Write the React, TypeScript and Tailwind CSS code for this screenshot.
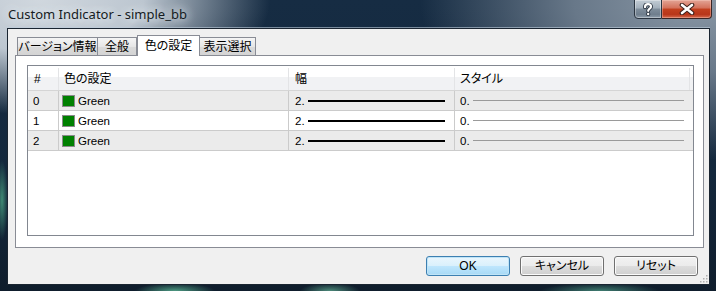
export default function App() {
  const rows = [0, 1, 2];
  return (
    <div className="relative w-[716px] h-[291px] overflow-hidden bg-[radial-gradient(ellipse_230px_115px_at_40px_0px,#d0d7de_0%,#bcc6d0_45%,rgba(150,165,180,0)_100%),radial-gradient(ellipse_280px_160px_at_700px_0px,#8a98a6_0%,#687889_45%,rgba(100,118,135,0)_100%),radial-gradient(ellipse_40px_8px_at_175px_291px,#4d9a82_0%,rgba(77,154,130,0)_100%),radial-gradient(ellipse_30px_8px_at_330px_291px,#4d8a7a_0%,rgba(77,138,122,0)_100%),radial-gradient(ellipse_60px_8px_at_600px_291px,#3f7c70_0%,rgba(63,124,112,0)_100%),radial-gradient(ellipse_6px_40px_at_2px_200px,#3f8a74_0%,rgba(63,138,116,0)_100%),linear-gradient(to_bottom,#162c43,#14283d_60%,#0f1d2c)] font-['Liberation_Sans','Noto_Sans_CJK_JP',sans-serif] text-[12px] text-black">
      {/* title bar */}
      <div className="flex h-[28px] items-start">
        <div className="ml-[8px] mt-[5px] font-['Noto_Sans',sans-serif] text-[13px] leading-[18px] text-[#151b22] [text-shadow:0_0_8px_#e6ebf0,0_0_12px_#e6ebf0]">
          Custom Indicator - simple_bb
        </div>
        <div className="ml-auto mr-[4px] mt-[-1px] flex">
          <div className="flex h-[20px] w-[28px] items-center justify-center rounded-bl-[4px] border border-[#2a3440] bg-[linear-gradient(to_bottom,#c2ccd5_0%,#a3b0bc_45%,#7f8e9c_50%,#6f7e8d_80%,#8e9dab_100%)] shadow-[inset_0_0_0_1px_rgba(255,255,255,0.35)]">
            <svg width="12" height="13" viewBox="0 0 12 13">
              <path d="M3 4.2 C3 2 4.5 1.2 6 1.2 C7.8 1.2 9 2.3 9 3.7 C9 5.6 6.2 5.8 6.2 7.8" fill="none" stroke="#2a3440" strokeWidth="4" strokeLinecap="round" />
              <circle cx="6.2" cy="11" r="2.1" fill="#2a3440" />
              <path d="M3 4.2 C3 2 4.5 1.2 6 1.2 C7.8 1.2 9 2.3 9 3.7 C9 5.6 6.2 5.8 6.2 7.8" fill="none" stroke="#ffffff" strokeWidth="2.2" strokeLinecap="round" />
              <circle cx="6.2" cy="11" r="1.2" fill="#ffffff" />
            </svg>
          </div>
          <div className="flex h-[20px] w-[50px] items-center justify-center rounded-br-[4px] border border-l-0 border-[#3a2525] bg-[linear-gradient(to_bottom,#e3a596_0%,#d3705a_45%,#c2401f_50%,#b8361a_80%,#d66a4e_100%)] shadow-[inset_0_0_0_1px_rgba(255,220,210,0.35)]">
            <svg width="16" height="12" viewBox="0 0 16 12">
              <path d="M3 2 L13 10 M13 2 L3 10" stroke="#3a1f1a" strokeWidth="4.6" strokeLinecap="round" />
              <path d="M3 2 L13 10 M13 2 L3 10" stroke="#ffffff" strokeWidth="2.6" strokeLinecap="round" />
            </svg>
          </div>
        </div>
      </div>

      {/* client area */}
      <div className="relative ml-[7px] flex h-[257px] w-[703px] flex-col border border-[#1a2531] bg-[#f0f0f0] shadow-[0_-1px_0_0_rgba(190,205,220,0.6)]">
        {/* tabs */}
        <div className="relative z-10 ml-[9px] mt-[6px] flex h-[20px] items-end leading-[16px]">
          <div className="flex h-[18px] w-[81px] items-center justify-center border border-b-0 border-[#898c95] bg-[linear-gradient(to_bottom,#f5f5f5,#e6e6e6_50%,#dadada_51%,#d4d4d4)] pt-[1px] [font-feature-settings:'palt']">
            バージョン情報
          </div>
          <div className="flex h-[18px] w-[39px] items-center justify-center border border-b-0 border-l-0 border-[#898c95] bg-[linear-gradient(to_bottom,#f5f5f5,#e6e6e6_50%,#dadada_51%,#d4d4d4)] pt-[1px] [font-feature-settings:'palt']">
            全般
          </div>
          <div className="mb-[-1px] flex h-[21px] w-[63px] items-start justify-center border border-b-0 border-[#898c95] bg-white pt-[2px] [font-feature-settings:'palt']">
            色の設定
          </div>
          <div className="flex h-[18px] w-[56px] items-center justify-center border border-b-0 border-l-0 border-[#898c95] bg-[linear-gradient(to_bottom,#f5f5f5,#e6e6e6_50%,#dadada_51%,#d4d4d4)] pt-[1px] [font-feature-settings:'palt']">
            表示選択
          </div>
        </div>

        {/* panel */}
        <div className="ml-[7px] h-[193px] w-[689px] border border-[#898c95] bg-white pl-[11px] pt-[9px]">
          <div className="flex h-[171px] w-[667px] flex-col border border-[#828790] bg-white">
            {/* header */}
            <div className="flex h-[25px] border-b border-[#d5d5d5] bg-[linear-gradient(to_bottom,#ffffff_0%,#ffffff_45%,#f1f2f4_46%,#f1f2f4_100%)] pt-[2px] leading-[16px] [font-feature-settings:'palt']">
              <div className="flex w-[31px] items-center border-r border-[#e3e4e6] pl-[6px]">#</div>
              <div className="flex w-[230px] items-center border-r border-[#e3e4e6] pl-[5px]">色の設定</div>
              <div className="flex w-[166px] items-center border-r border-[#e3e4e6] pl-[6px]">幅</div>
              <div className="flex w-[235px] items-center border-r border-[#e3e4e6] pl-[5px]">スタイル</div>
              <div className="flex-1" />
            </div>
            {rows.map((r) => (
              <div
                key={r}
                className={`flex h-[20px] border-b border-[#cbcbcb] text-[11.5px] leading-[14px] ${r === 1 ? 'bg-white' : 'bg-[#ebebeb]'}`}
              >
                <div className="flex w-[31px] items-center border-r border-[#cbcbcb] pl-[5px]">{r}</div>
                <div className="flex w-[230px] items-center border-r border-[#cbcbcb] pl-[3px]">
                  <span className="mr-[3px] h-[12px] w-[13px] border border-[#8a8a8a] bg-[#008000]" />
                  Green
                </div>
                <div className="flex w-[166px] items-center border-r border-[#cbcbcb] pl-[6px]">
                  <span className="w-[13px]">2.</span>
                  <span className="h-[2px] w-[137px] bg-black" />
                </div>
                <div className="flex flex-1 items-center pl-[5px]">
                  <span className="w-[13px]">0.</span>
                  <span className="h-[1px] w-[211px] bg-[#9a9a9a]" />
                </div>
              </div>
            ))}
          </div>
        </div>

        {/* buttons */}
        <div className="mt-[8px] flex justify-end gap-[10px] pr-[11px] leading-[14px]">
          <button className="flex h-[20px] w-[84px] items-center justify-center rounded-[3px] border border-[#3c7fb1] bg-[linear-gradient(to_bottom,#eaf6fd,#d9f0fc_50%,#bee6fd_51%,#a7d9f5)] shadow-[inset_0_0_0_1px_#bfe4f7]">
            OK
          </button>
          <button className="flex h-[20px] w-[84px] items-center justify-center rounded-[3px] border border-[#707070] bg-[linear-gradient(to_bottom,#f2f2f2,#ebebeb_50%,#dddddd_51%,#cfcfcf)] shadow-[inset_0_0_0_1px_#fbfbfb] [font-feature-settings:'palt']">
            キャンセル
          </button>
          <button className="flex h-[20px] w-[84px] items-center justify-center rounded-[3px] border border-[#707070] bg-[linear-gradient(to_bottom,#f2f2f2,#ebebeb_50%,#dddddd_51%,#cfcfcf)] shadow-[inset_0_0_0_1px_#fbfbfb] [font-feature-settings:'palt']">
            リセット
          </button>
        </div>

        {/* size grip */}
        <svg className="absolute bottom-[1px] right-[1px]" width="9" height="9" viewBox="0 0 9 9">
          {[
            [7, 1],
            [7, 4],
            [4, 4],
            [7, 7],
            [4, 7],
            [1, 7],
          ].map(([x, y]) => (
            <rect key={`${x}-${y}`} x={x} y={y} width="1.5" height="1.5" fill="#b0b0b0" />
          ))}
        </svg>
      </div>
    </div>
  );
}
